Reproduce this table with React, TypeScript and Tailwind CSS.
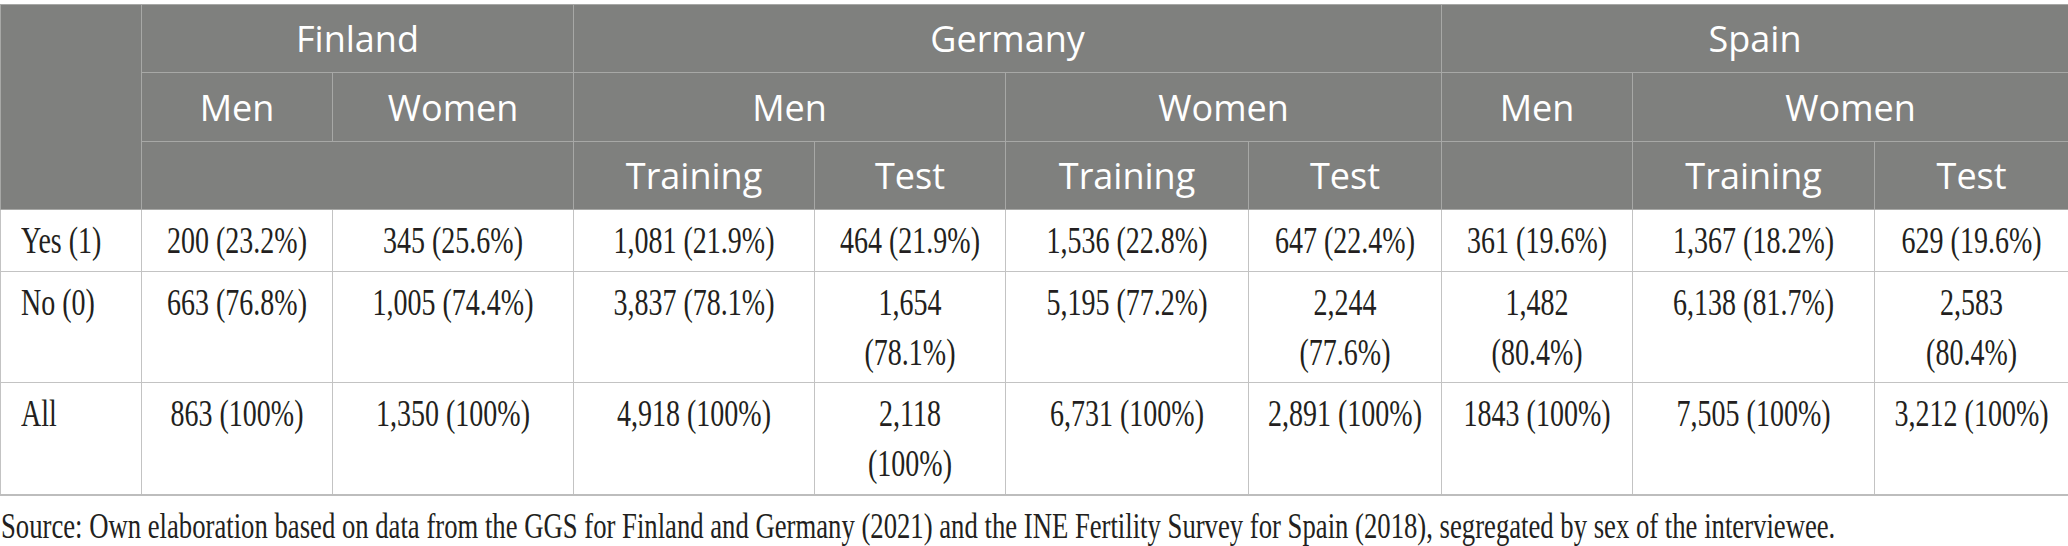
import React from "react";

const widths = [141, 191, 241, 241, 191, 243, 193, 191, 242, 194];

type Row = { label: string; cells: string[][] };

const rows: Row[] = [
  {
    label: "Yes (1)",
    cells: [
      ["200 (23.2%)"],
      ["345 (25.6%)"],
      ["1,081 (21.9%)"],
      ["464 (21.9%)"],
      ["1,536 (22.8%)"],
      ["647 (22.4%)"],
      ["361 (19.6%)"],
      ["1,367 (18.2%)"],
      ["629 (19.6%)"],
    ],
  },
  {
    label: "No (0)",
    cells: [
      ["663 (76.8%)"],
      ["1,005 (74.4%)"],
      ["3,837 (78.1%)"],
      ["1,654", "(78.1%)"],
      ["5,195 (77.2%)"],
      ["2,244", "(77.6%)"],
      ["1,482", "(80.4%)"],
      ["6,138 (81.7%)"],
      ["2,583", "(80.4%)"],
    ],
  },
  {
    label: "All",
    cells: [
      ["863 (100%)"],
      ["1,350 (100%)"],
      ["4,918 (100%)"],
      ["2,118", "(100%)"],
      ["6,731 (100%)"],
      ["2,891 (100%)"],
      ["1843 (100%)"],
      ["7,505 (100%)"],
      ["3,212 (100%)"],
    ],
  },
];

const rowHeights = ["h-[62px]", "h-[111px]", "h-[112px]"];

function Line({ text }: { text: string }) {
  return (
    <div className="leading-[50px] whitespace-nowrap">
      <span className="inline-block scale-y-[1.35]">{text}</span>
    </div>
  );
}

function Th({ children, colSpan, rowSpan }: { children?: React.ReactNode; colSpan?: number; rowSpan?: number }) {
  return (
    <th
      colSpan={colSpan}
      rowSpan={rowSpan}
      className="border border-[#a7a8a6] p-0 text-center align-middle text-[36px] font-normal leading-[49px] text-white"
    >
      {children}
    </th>
  );
}

export default function App() {
  return (
    <div className="h-[546px] w-[2068px] overflow-hidden bg-white pt-[4px]">
      <table className="w-[2068px] table-fixed border-collapse border-b-2 border-[#bdbdbd]">
        <colgroup>
          {widths.map((w, i) => (
            <col key={i} style={{ width: w }} />
          ))}
        </colgroup>
        <thead className="bg-[#7f807e] font-['Open_Sans','Noto_Sans',sans-serif]">
          <tr className="h-[68px] border-t border-[#c4c4c4]">
            <Th rowSpan={3} />
            <Th colSpan={2}>Finland</Th>
            <Th colSpan={4}>Germany</Th>
            <Th colSpan={3}>Spain</Th>
          </tr>
          <tr className="h-[69px]">
            <Th>Men</Th>
            <Th>Women</Th>
            <Th colSpan={2}>Men</Th>
            <Th colSpan={2}>Women</Th>
            <Th>Men</Th>
            <Th colSpan={2}>Women</Th>
          </tr>
          <tr className="h-[68px]">
            <Th colSpan={2} />
            <Th>Training</Th>
            <Th>Test</Th>
            <Th>Training</Th>
            <Th>Test</Th>
            <Th />
            <Th>Training</Th>
            <Th>Test</Th>
          </tr>
        </thead>
        <tbody className="font-['Liberation_Serif','Times_New_Roman',serif] text-[28px] text-[#231f20]">
          {rows.map((r, ri) => (
            <tr key={r.label} className={rowHeights[ri]}>
              <td className="border border-[#c3c3c3] px-[20px] pt-[6px] text-left align-top">
                <Line text={r.label} />
              </td>
              {r.cells.map((lines, ci) => (
                <td key={ci} className="border border-[#c3c3c3] px-[10px] pt-[6px] text-center align-top">
                  {lines.map((t, li) => (
                    <Line key={li} text={t} />
                  ))}
                </td>
              ))}
            </tr>
          ))}
        </tbody>
      </table>
      <p className="mt-[12px] whitespace-nowrap pl-[1px] font-['Liberation_Serif','Times_New_Roman',serif] text-[26.7px] leading-[36px] text-[#231f20]">
        <span className="inline-block scale-y-[1.35]">
          Source: Own elaboration based on data from the GGS for Finland and Germany (2021) and the INE Fertility Survey
          for Spain (2018), segregated by sex of the interviewee.
        </span>
      </p>
    </div>
  );
}
